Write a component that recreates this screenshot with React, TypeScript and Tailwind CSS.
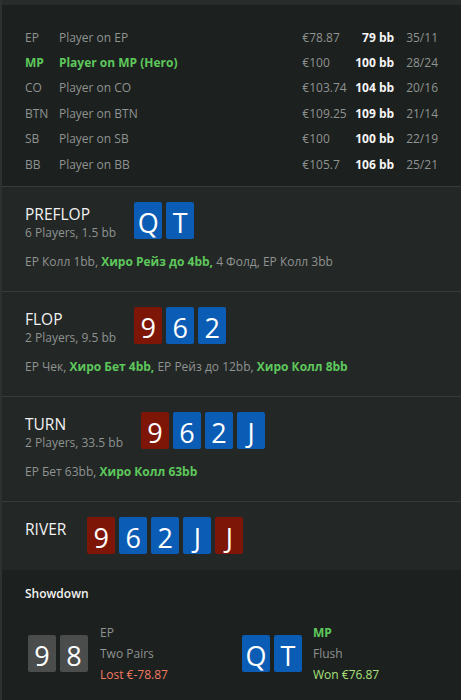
import React from "react";

type Card = { r: string; c: "red" | "blue" | "gray" };

const cardBg: Record<Card["c"], string> = {
  red: "bg-[#7e1608]",
  blue: "bg-[#0a5cb4]",
  gray: "bg-[#4b4c4c]",
};

function CardBox({ card }: { card: Card }) {
  return (
    <div
      className={`${cardBg[card.c]} w-[28px] h-[37px] rounded-[2px] flex items-center justify-center text-white text-[27px] leading-none pt-[3px]`}
    >
      {card.r}
    </div>
  );
}

function Cards({ cards }: { cards: Card[] }) {
  return (
    <div className="flex gap-[4px]">
      {cards.map((c, i) => (
        <CardBox key={i} card={c} />
      ))}
    </div>
  );
}

const players = [
  { pos: "EP", name: "Player on EP", money: "€78.87", bb: "79 bb", st: "35/11" },
  { pos: "MP", name: "Player on MP (Hero)", money: "€100", bb: "100 bb", st: "28/24", hero: true },
  { pos: "CO", name: "Player on CO", money: "€103.74", bb: "104 bb", st: "20/16" },
  { pos: "BTN", name: "Player on BTN", money: "€109.25", bb: "109 bb", st: "21/14" },
  { pos: "SB", name: "Player on SB", money: "€100", bb: "100 bb", st: "22/19" },
  { pos: "BB", name: "Player on BB", money: "€105.7", bb: "106 bb", st: "25/21" },
];

type Act = { t: string; hero?: boolean };

function Street({
  title,
  sub,
  cards,
  acts,
}: {
  title: string;
  sub?: string;
  cards: Card[];
  acts?: Act[];
}) {
  return (
    <div className={`border-t border-[#363a38] px-[23px] pt-[15px] ${acts ? "pb-[20px]" : "pb-[16px]"}`}>
      <div className="flex items-start">
        <div className={`flex flex-col ${sub ? "mr-[18px]" : "mr-[21px]"}`}>
          <div className="text-[15.5px] leading-[20px] text-[#f2f2f2] mt-[2px]">{title}</div>
          {sub && <div className="text-[12px] leading-[18px] text-[#8f9391]">{sub}</div>}
        </div>
        <Cards cards={cards} />
      </div>
      {acts && (
        <div className="mt-[11px] text-[12px] leading-[18px] text-[#8f9391] whitespace-nowrap">
          {acts.map((a, i) => (
            <span key={i} className={a.hero ? "font-bold text-[#5ec85c]" : ""}>
              {a.t}
              {i < acts.length - 1 ? ", " : ""}
            </span>
          ))}
        </div>
      )}
    </div>
  );
}

export default function App() {
  const R = (r: string): Card => ({ r, c: "red" });
  const B = (r: string): Card => ({ r, c: "blue" });
  const G = (r: string): Card => ({ r, c: "gray" });
  return (
    <div className="w-[461px] h-[700px] overflow-hidden bg-[#232726] border-l-2 border-[#2d3130] font-['Open_Sans',sans-serif]">
      <div className="h-[5px] bg-[#282c2a]" />
      <div className="bg-[#1c201e] pt-[20px] pb-[9px] px-[23px]">
        {players.map((p) => (
          <div
            key={p.pos}
            className={`flex items-center h-[25.4px] text-[12px] whitespace-nowrap ${p.hero ? "text-[#5ec85c] font-bold" : "text-[#8f9391]"}`}
          >
            <div className="w-[34px]">{p.pos}</div>
            <div className="w-[244px]">{p.name}</div>
            <div className="w-[52px] font-normal text-[#8f9391]">{p.money}</div>
            <div className="w-[40px] flex justify-end font-bold text-[#f6f6f6]">
              <span>{p.bb}</span>
            </div>
            <div className="ml-[12px] font-normal text-[#8f9391]">{p.st}</div>
          </div>
        ))}
      </div>
      <Street
        title="PREFLOP"
        sub="6 Players, 1.5 bb"
        cards={[B("Q"), B("T")]}
        acts={[
          { t: "EP Колл 1bb" },
          { t: "Хиро Рейз до 4bb", hero: true },
          { t: "4 Фолд" },
          { t: "EP Колл 3bb" },
        ]}
      />
      <Street
        title="FLOP"
        sub="2 Players, 9.5 bb"
        cards={[R("9"), B("6"), B("2")]}
        acts={[
          { t: "EP Чек" },
          { t: "Хиро Бет 4bb", hero: true },
          { t: "EP Рейз до 12bb" },
          { t: "Хиро Колл 8bb", hero: true },
        ]}
      />
      <Street
        title="TURN"
        sub="2 Players, 33.5 bb"
        cards={[R("9"), B("6"), B("2"), B("J")]}
        acts={[{ t: "EP Бет 63bb" }, { t: "Хиро Колл 63bb", hero: true }]}
      />
      <Street title="RIVER" cards={[R("9"), B("6"), B("2"), B("J"), R("J")]} />
      <div className="bg-[#1c201e] px-[23px] pt-[15px] pb-[30px]">
        <div className="text-[12px] leading-[18px] font-semibold text-[#f2f2f2]">Showdown</div>
        <div className="flex mt-[19px] pl-[3px]">
          <div className="w-[214px] flex items-center">
            <Cards cards={[G("9"), G("8")]} />
            <div className="ml-[12px] flex flex-col text-[12px] leading-[21px] whitespace-nowrap">
              <div className="text-[#8f9391]">EP</div>
              <div className="text-[#8f9391]">Two Pairs</div>
              <div className="text-[#f27a63]">Lost €-78.87</div>
            </div>
          </div>
          <div className="flex items-center">
            <Cards cards={[B("Q"), B("T")]} />
            <div className="ml-[11px] flex flex-col text-[12px] leading-[21px] whitespace-nowrap">
              <div className="text-[#5ec85c] font-bold">MP</div>
              <div className="text-[#8f9391]">Flush</div>
              <div className="text-[#a9e07c]">Won €76.87</div>
            </div>
          </div>
        </div>
      </div>
    </div>
  );
}
